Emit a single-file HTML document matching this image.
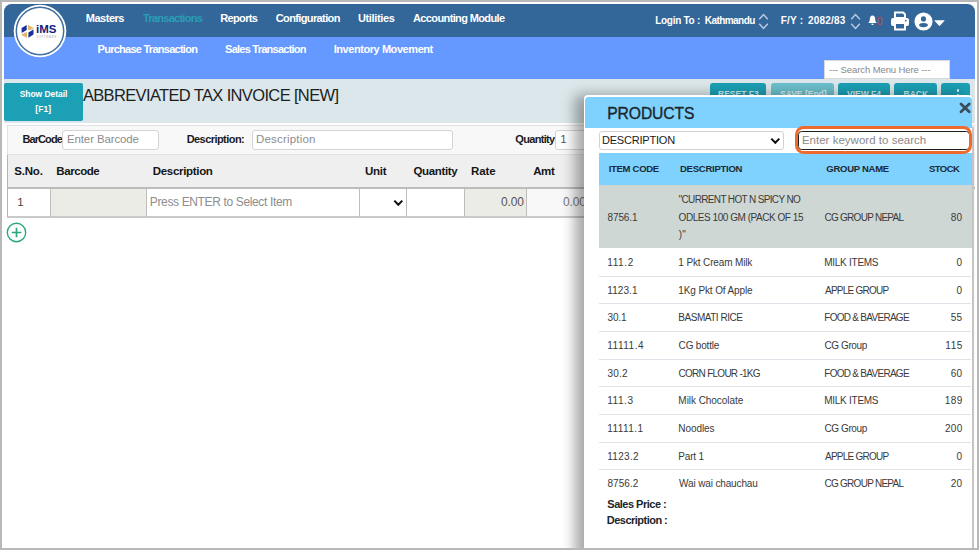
<!DOCTYPE html>
<html lang="en">
<head>
<meta charset="utf-8">
<title>Abbreviated Tax Invoice</title>
<style>
*{box-sizing:border-box;margin:0;padding:0}
html,body{width:979px;height:550px;overflow:hidden;background:#b8b8b8;font-family:"Liberation Sans",sans-serif}
.abs{position:absolute}
.t{position:absolute;white-space:pre}
#frame{position:absolute;left:2px;top:2px;width:975px;height:545.8px;background:#fff}
#app{position:absolute;left:3.6px;top:3.6px;width:971.8px;height:544.2px;background:#fff;border-radius:7.5px 7.5px 0 0;overflow:hidden}
#pg{position:absolute;left:-3.6px;top:-3.6px;width:979px;height:550px}
.btn{position:absolute;top:83px;height:24px;background:#1b9fb3;border-radius:3px}
.cell{position:absolute;top:189px;height:29px;border-right:1px solid #bdbdbd;border-bottom:2px solid #c9c9c9;background:#fff}
</style>
</head>
<body>
<div id="frame"></div>
<div id="app"><div id="pg">
  <!-- bars -->
  <div class="abs" style="left:0;top:0;width:979px;height:37.4px;background:#336699"></div>
  <div class="abs" style="left:0;top:37.4px;width:979px;height:42px;background:#6699ff"></div>
  <div class="abs" style="left:0;top:79.4px;width:979px;height:43.5px;background:#dbe7ea"></div>

  <!-- logo -->
  <svg class="abs" style="left:13px;top:4.4px" width="54" height="54" viewBox="0 0 54 54">
    <circle cx="27" cy="27" r="26.3" fill="#fff"/>
    <circle cx="27" cy="27" r="23.7" fill="none" stroke="#41709f" stroke-width="1.5"/>
    <g transform="translate(0,0.7)"><polygon points="8.6,23.2 13.7,20.2 13.7,25.3 8.6,28.4" fill="#1c2f9a"/>
    <polygon points="14.9,20 20.5,23.3 20.5,24.4 14.9,25.6" fill="#e2b76c"/>
    <polygon points="15.4,27.9 20.5,24.9 20.5,29.9 15.4,33" fill="#1c2f9a"/>
    <polygon points="8.6,29.6 14,27.4 14,33.1 8.6,30.6" fill="#e2b76c"/>
    <text x="23" y="28.7" font-family="Liberation Sans, sans-serif" font-weight="bold" font-size="10" fill="#16207c" textLength="20.4" lengthAdjust="spacingAndGlyphs">iMS</text></g>
    <text x="23.2" y="33.9" font-family="Liberation Sans, sans-serif" font-size="2.6" fill="#a9a9a9" textLength="20" lengthAdjust="spacing">SOFTWARE</text>
  </svg>

  <span class="t" style="left:85.85px;top:10.80px;font-size:11px;font-weight:bold;letter-spacing:-0.500px;line-height:14px;color:#fff;">Masters</span><span class="t" style="left:220.25px;top:10.80px;font-size:11px;font-weight:bold;letter-spacing:-0.650px;line-height:14px;color:#fff;">Reports</span><span class="t" style="left:275.80px;top:10.80px;font-size:11px;font-weight:bold;letter-spacing:-0.625px;line-height:14px;color:#fff;">Configuration</span><span class="t" style="left:357.95px;top:10.80px;font-size:11px;font-weight:bold;letter-spacing:-0.350px;line-height:14px;color:#fff;">Utilities</span><span class="t" style="left:413.05px;top:10.80px;font-size:11px;font-weight:bold;letter-spacing:-0.625px;line-height:14px;color:#fff;">Accounting Module</span><span class="t" style="left:143.00px;top:10.80px;font-size:11px;font-weight:bold;letter-spacing:-0.736px;line-height:14px;color:#2a9eb6;">Transactions</span><span class="t" style="left:97.55px;top:41.60px;font-size:11px;font-weight:bold;letter-spacing:-0.737px;line-height:14px;color:#fff;">Purchase Transaction</span><span class="t" style="left:225.05px;top:41.60px;font-size:11px;font-weight:bold;letter-spacing:-0.753px;line-height:14px;color:#fff;">Sales Transaction</span><span class="t" style="left:333.65px;top:41.60px;font-size:11px;font-weight:bold;letter-spacing:-0.432px;line-height:14px;color:#fff;">Inventory Movement</span><span class="t" style="left:655.15px;top:13.50px;font-size:10px;font-weight:bold;letter-spacing:-0.278px;line-height:13px;color:#fff;">Login To :</span><span class="t" style="left:704.75px;top:13.50px;font-size:10px;font-weight:bold;letter-spacing:-0.550px;line-height:13px;color:#fff;">Kathmandu</span><span class="t" style="left:780.85px;top:13.50px;font-size:10px;font-weight:bold;letter-spacing:0.162px;line-height:13px;color:#fff;">F/Y :</span><span class="t" style="left:808.05px;top:13.50px;font-size:10px;font-weight:bold;letter-spacing:0.200px;line-height:13px;color:#fff;">2082/83</span><span class="t" style="left:876.50px;top:13.70px;font-size:10.5px;font-weight:normal;letter-spacing:0.000px;line-height:14px;color:#e23a44;">0</span>
  <!-- spinners -->
  <svg class="abs" style="left:757.5px;top:12.5px" width="11" height="17" viewBox="0 0 11 17"><path d="M1.2 6.2 L5.5 1.6 L9.8 6.2 M1.2 10.8 L5.5 15.4 L9.8 10.8" fill="none" stroke="#b9cbe3" stroke-width="1.45"/></svg>
  <svg class="abs" style="left:850.2px;top:12.5px" width="11" height="17" viewBox="0 0 11 17"><path d="M1.2 6.2 L5.5 1.6 L9.8 6.2 M1.2 10.8 L5.5 15.4 L9.8 10.8" fill="none" stroke="#b9cbe3" stroke-width="1.45"/></svg>
  <!-- bell -->
  <svg class="abs" style="left:868.2px;top:15.3px" width="9" height="11" viewBox="0 0 10 11" preserveAspectRatio="none"><path d="M5 0.4 C2.8 0.4 2 2.4 2 4.4 C2 6.4 1 7 0.3 7.9 L9.7 7.9 C9 7 8 6.4 8 4.4 C8 2.4 7.2 0.4 5 0.4 Z M3.6 8.7 A1.4 1.4 0 0 0 6.4 8.7 Z" fill="#fff"/></svg>
  <!-- printer -->
  <svg class="abs" style="left:890px;top:11px" width="20" height="20" viewBox="0 0 20 20">
    <path d="M5 1.5 H13.2 L15 3.3 V7 H5 Z" fill="none" stroke="#fff" stroke-width="2"/>
    <rect x="1" y="7" width="18" height="8" rx="2" fill="#fff"/>
    <rect x="5" y="12" width="10" height="6.5" fill="#336699" stroke="#fff" stroke-width="2"/>
    <circle cx="15.8" cy="9.6" r="0.9" fill="#336699"/>
  </svg>
  <!-- user -->
  <svg class="abs" style="left:914px;top:11.5px" width="19" height="19" viewBox="0 0 20 20">
    <circle cx="10" cy="10" r="9.5" fill="#fff"/>
    <circle cx="10" cy="7.3" r="2.7" fill="#336699"/>
    <ellipse cx="10" cy="13.8" rx="4.6" ry="2.2" fill="#336699"/>
  </svg>
  <svg class="abs" style="left:934.2px;top:19.8px" width="11" height="6" viewBox="0 0 11 6"><path d="M0.9 0.3 H10.1 Q10.8 0.5 10.3 1.1 L6.1 5.4 Q5.5 5.9 4.9 5.4 L0.7 1.1 Q0.2 0.5 0.9 0.3 Z" fill="#fff"/></svg>

  <!-- search menu -->
  <div class="abs" style="left:824.3px;top:59.6px;width:125.8px;height:19.8px;background:#fff;border:1px solid #d8d8d8"></div>
  <span class="t" style="left:828.90px;top:63.70px;font-size:9.5px;font-weight:normal;letter-spacing:-0.100px;line-height:12px;color:#888;">--- Search Menu Here ---</span>

  <!-- title row -->
  <div class="abs" style="left:3.6px;top:83px;width:79.2px;height:37.6px;background:#1ba0b5;border-radius:2px"></div>
  <div class="btn" style="left:710px;width:56px"></div>
  <div class="btn" style="left:771px;width:63px;background:#6bbfcc"></div>
  <div class="btn" style="left:838.3px;width:51.8px"></div>
  <div class="btn" style="left:894.3px;width:42.5px"></div>
  <div class="btn" style="left:940.6px;width:29.6px"></div>
  <span class="t" style="left:718px;top:89.2px;font-size:8.5px;font-weight:bold;color:#cdebf0;line-height:11px">RESET F3</span>
  <span class="t" style="left:780px;top:89.2px;font-size:8.5px;font-weight:bold;color:#d8eff3;line-height:11px">SAVE [End]</span>
  <span class="t" style="left:847px;top:89.2px;font-size:8.5px;font-weight:bold;color:#cdebf0;line-height:11px">VIEW F4</span>
  <span class="t" style="left:903.5px;top:89.2px;font-size:8.5px;font-weight:bold;color:#cdebf0;line-height:11px">BACK</span>
  <div class="abs" style="left:956.5px;top:88.8px;width:2.8px;height:2.8px;border-radius:50%;background:#e6f6f8"></div>
  <div class="abs" style="left:956.5px;top:93.6px;width:2.8px;height:2.8px;border-radius:50%;background:#e6f6f8"></div>
  <span class="t" style="left:82.90px;top:84.70px;font-size:16.5px;font-weight:normal;letter-spacing:-0.643px;line-height:21px;color:#1e1e1e;">ABBREVIATED TAX INVOICE [NEW]</span><span class="t" style="left:19.75px;top:89.20px;font-size:8.5px;font-weight:bold;letter-spacing:-0.060px;line-height:11px;color:#fff;">Show Detail</span><span class="t" style="left:35.30px;top:103.50px;font-size:8.5px;font-weight:bold;letter-spacing:0.083px;line-height:11px;color:#fff;">[F1]</span>

  <!-- barcode row -->
  <div class="abs" style="left:7.4px;top:125px;width:970px;height:29.8px;background:#f8f8f8;border:1px solid #e2e2e2"></div>
  <span class="t" style="left:22.45px;top:132.00px;font-size:11px;font-weight:bold;letter-spacing:-0.908px;line-height:14px;color:#1b1b1b;">BarCode</span><span class="t" style="left:186.65px;top:132.00px;font-size:11px;font-weight:bold;letter-spacing:-0.555px;line-height:14px;color:#1b1b1b;">Description:</span><span class="t" style="left:515.30px;top:132.00px;font-size:11px;font-weight:bold;letter-spacing:-0.686px;line-height:14px;color:#1b1b1b;">Quantity</span>
  <div class="abs" style="left:62.4px;top:129.8px;width:96.2px;height:20px;background:#fff;border:1px solid #d4d4d4;border-radius:3px"></div>
  <div class="abs" style="left:252px;top:129.8px;width:201.2px;height:19.9px;background:#fff;border:1px solid #d4d4d4;border-radius:3px"></div>
  <div class="abs" style="left:555px;top:130px;width:100px;height:19.8px;background:#fff;border:1px solid #d4d4d4;border-radius:3px"></div>
  <span class="t" style="left:67.00px;top:132.10px;font-size:11.5px;font-weight:normal;letter-spacing:-0.133px;line-height:15px;color:#8d8d8d;">Enter Barcode</span><span class="t" style="left:255.90px;top:132.10px;font-size:11.5px;font-weight:normal;letter-spacing:0.205px;line-height:15px;color:#8d8d8d;">Description</span><span class="t" style="left:560.25px;top:132.10px;font-size:11.5px;font-weight:normal;letter-spacing:0.000px;line-height:15px;color:#555;">1</span>

  <!-- table -->
  <div class="abs" style="left:7px;top:155px;width:970px;height:34px;background:#efefef;border-left:1px solid #b5b5b5;border-bottom:2px solid #bcbcbc"></div>
  <div class="cell" style="left:7px;width:44px;border-left:1px solid #b5b5b5"></div>
  <div class="cell" style="left:51px;width:96px;background:#ecece6"></div>
  <div class="cell" style="left:147px;width:213px"></div>
  <div class="cell" style="left:360px;width:47px"></div>
  <div class="cell" style="left:407px;width:58px"></div>
  <div class="cell" style="left:465px;width:62px;background:#ecece6"></div>
  <div class="cell" style="left:527px;width:62px;background:#f8f8f8"></div>
  <svg class="abs" style="left:392.6px;top:198.6px" width="10.6" height="8" viewBox="0 0 10.6 8"><path d="M1.3 1.6 L5.3 5.8 L9.3 1.6" fill="none" stroke="#111" stroke-width="2"/></svg>
  <span class="t" style="left:14.15px;top:163.50px;font-size:11.5px;font-weight:bold;letter-spacing:-0.175px;line-height:15px;color:#161616;">S.No.</span><span class="t" style="left:56.35px;top:163.50px;font-size:11.5px;font-weight:bold;letter-spacing:-0.433px;line-height:15px;color:#161616;">Barcode</span><span class="t" style="left:152.75px;top:163.50px;font-size:11.5px;font-weight:bold;letter-spacing:-0.315px;line-height:15px;color:#161616;">Description</span><span class="t" style="left:364.95px;top:163.50px;font-size:11.5px;font-weight:bold;letter-spacing:-0.200px;line-height:15px;color:#161616;">Unit</span><span class="t" style="left:413.50px;top:163.50px;font-size:11.5px;font-weight:bold;letter-spacing:-0.357px;line-height:15px;color:#161616;">Quantity</span><span class="t" style="left:471.05px;top:163.50px;font-size:11.5px;font-weight:bold;letter-spacing:-0.083px;line-height:15px;color:#161616;">Rate</span><span class="t" style="left:533.25px;top:163.50px;font-size:11.5px;font-weight:bold;letter-spacing:-0.450px;line-height:15px;color:#161616;">Amt</span><span class="t" style="left:17.15px;top:195.30px;font-size:11.5px;font-weight:normal;letter-spacing:0.000px;line-height:15px;color:#444;">1</span><span class="t" style="left:149.80px;top:194.40px;font-size:12px;font-weight:normal;letter-spacing:-0.358px;line-height:16px;color:#8d8d8d;">Press ENTER to Select Item</span><span class="t" style="left:500.90px;top:194.40px;font-size:12px;font-weight:normal;letter-spacing:-0.133px;line-height:16px;color:#555;">0.00</span><span class="t" style="left:562.90px;top:194.40px;font-size:12px;font-weight:normal;letter-spacing:-0.133px;line-height:16px;color:#777;">0.00</span>
  <!-- plus -->
  <svg class="abs" style="left:5.85px;top:221.55px" width="21" height="21" viewBox="0 0 21 21"><circle cx="10.5" cy="10.5" r="9.2" fill="#fff" stroke="#2aa87a" stroke-width="1.4"/><path d="M10.5 5.7 V15.3 M5.7 10.5 H15.3" stroke="#2aa87a" stroke-width="1.7"/></svg>

  <!-- right edge line -->
  <div class="abs" style="left:972px;top:127px;width:1.6px;height:425px;background:#c9c9c9"></div>

  <!-- popup -->
  <div class="abs" style="left:584px;top:95.4px;width:387.6px;height:470px;background:#fff;border-radius:4px;box-shadow:-9px 0 14px rgba(0,0,0,.35)"></div>
  <div class="abs" style="left:585.2px;top:96.7px;width:386.4px;height:30.9px;background:#7fd1fe;border-radius:3.5px 3.5px 0 0"></div>
  <svg class="abs" style="left:958.8px;top:101.9px" width="12" height="12" viewBox="0 0 12 12"><path d="M2 2 L10.2 9.8 M10.2 2 L2 9.8" stroke="#3c4c5a" stroke-width="2.7" stroke-linecap="round"/></svg>
  <div class="abs" style="left:598.8px;top:130.6px;width:185px;height:19.4px;background:#fff;border:1px solid #d2d2d2;border-radius:3px"></div>
  <svg class="abs" style="left:770.4px;top:137px" width="10.6" height="8" viewBox="0 0 10.6 8"><path d="M1.3 1.6 L5.3 5.8 L9.3 1.6" fill="none" stroke="#111" stroke-width="2"/></svg>
  <div class="abs" style="left:798.4px;top:130.7px;width:172px;height:19.2px;background:#fff;border:1.5px solid #1f1f1f;border-radius:3.5px"></div>
  <div class="abs" style="left:599px;top:153.1px;width:372.6px;height:31.6px;background:#7fd1fe"></div>
  <div class="abs" style="left:599px;top:184.7px;width:372.6px;height:63.8px;background:#cfd7d5"></div>
  <div class="abs" style="left:599px;top:275.6px;width:372px;height:1.2px;background:#dfe3ea"></div><div class="abs" style="left:599px;top:303.2px;width:372px;height:1.2px;background:#dfe3ea"></div><div class="abs" style="left:599px;top:330.9px;width:372px;height:1.2px;background:#dfe3ea"></div><div class="abs" style="left:599px;top:358.6px;width:372px;height:1.2px;background:#dfe3ea"></div><div class="abs" style="left:599px;top:386.2px;width:372px;height:1.2px;background:#dfe3ea"></div><div class="abs" style="left:599px;top:413.9px;width:372px;height:1.2px;background:#dfe3ea"></div><div class="abs" style="left:599px;top:441.6px;width:372px;height:1.2px;background:#dfe3ea"></div><div class="abs" style="left:599px;top:469.3px;width:372px;height:1.2px;background:#dfe3ea"></div>
  <span class="t" style="left:607.15px;top:104.10px;font-size:15.7px;font-weight:normal;letter-spacing:-0.086px;line-height:20px;color:#1c262c;-webkit-text-stroke:0.35px #1c262c;">PRODUCTS</span><span class="t" style="left:602.00px;top:133.30px;font-size:11px;font-weight:normal;letter-spacing:-0.205px;line-height:14px;color:#1a1a1a;">DESCRIPTION</span><span class="t" style="left:801.90px;top:132.90px;font-size:11.5px;font-weight:normal;letter-spacing:0.016px;line-height:15px;color:#8a8a8a;">Enter keyword to search</span><span class="t" style="left:608.70px;top:162.50px;font-size:9.5px;font-weight:bold;letter-spacing:-0.287px;line-height:12px;color:#1c2a33;">ITEM CODE</span><span class="t" style="left:680.00px;top:162.50px;font-size:9.5px;font-weight:bold;letter-spacing:-0.245px;line-height:12px;color:#1c2a33;">DESCRIPTION</span><span class="t" style="left:826.35px;top:162.50px;font-size:9.5px;font-weight:bold;letter-spacing:-0.272px;line-height:12px;color:#1c2a33;">GROUP NAME</span><span class="t" style="left:928.95px;top:162.50px;font-size:9.5px;font-weight:bold;letter-spacing:-0.537px;line-height:12px;color:#1c2a33;">STOCK</span><span class="t" style="left:678.60px;top:193.00px;font-size:10px;font-weight:normal;letter-spacing:-0.645px;line-height:13px;color:#3a3a3a;">&quot;CURRENT HOT N SPICY NO</span><span class="t" style="left:678.60px;top:210.70px;font-size:10px;font-weight:normal;letter-spacing:-0.457px;line-height:13px;color:#3a3a3a;">ODLES 100 GM (PACK OF 15</span><span class="t" style="left:678.85px;top:228.30px;font-size:10px;font-weight:normal;letter-spacing:0.000px;line-height:13px;color:#3a3a3a;">)&quot;</span><span class="t" style="left:607.50px;top:210.70px;font-size:10px;font-weight:normal;letter-spacing:-0.110px;line-height:13px;color:#3a3a3a;">8756.1</span><span class="t" style="left:824.50px;top:210.70px;font-size:10px;font-weight:normal;letter-spacing:-0.735px;line-height:13px;color:#3a3a3a;">CG GROUP NEPAL</span><span class="t" style="left:950.70px;top:210.70px;font-size:10px;font-weight:normal;letter-spacing:0.350px;line-height:13px;color:#3a3a3a;">80</span><span class="t" style="left:607.25px;top:256.10px;font-size:10px;font-weight:normal;letter-spacing:0.612px;line-height:13px;color:#3a3a3a;">111.2</span><span class="t" style="left:678.35px;top:256.10px;font-size:10px;font-weight:normal;letter-spacing:-0.143px;line-height:13px;color:#3a3a3a;">1 Pkt Cream Milk</span><span class="t" style="left:824.25px;top:256.10px;font-size:10px;font-weight:normal;letter-spacing:-0.267px;line-height:13px;color:#3a3a3a;">MILK ITEMS</span><span class="t" style="left:956.55px;top:256.10px;font-size:10px;font-weight:normal;letter-spacing:0.000px;line-height:13px;color:#3a3a3a;">0</span><span class="t" style="left:607.25px;top:283.77px;font-size:10px;font-weight:normal;letter-spacing:0.090px;line-height:13px;color:#3a3a3a;">1123.1</span><span class="t" style="left:678.35px;top:283.77px;font-size:10px;font-weight:normal;letter-spacing:-0.127px;line-height:13px;color:#3a3a3a;">1Kg Pkt Of Apple</span><span class="t" style="left:825.00px;top:283.77px;font-size:10px;font-weight:normal;letter-spacing:-0.755px;line-height:13px;color:#3a3a3a;">APPLE GROUP</span><span class="t" style="left:956.55px;top:283.77px;font-size:10px;font-weight:normal;letter-spacing:0.000px;line-height:13px;color:#3a3a3a;">0</span><span class="t" style="left:607.50px;top:311.44px;font-size:10px;font-weight:normal;letter-spacing:-0.167px;line-height:13px;color:#3a3a3a;">30.1</span><span class="t" style="left:678.35px;top:311.44px;font-size:10px;font-weight:normal;letter-spacing:-0.477px;line-height:13px;color:#3a3a3a;">BASMATI RICE</span><span class="t" style="left:824.25px;top:311.44px;font-size:10px;font-weight:normal;letter-spacing:-0.718px;line-height:13px;color:#3a3a3a;">FOOD &amp; BAVERAGE</span><span class="t" style="left:950.70px;top:311.44px;font-size:10px;font-weight:normal;letter-spacing:0.350px;line-height:13px;color:#3a3a3a;">55</span><span class="t" style="left:607.25px;top:339.11px;font-size:10px;font-weight:normal;letter-spacing:0.508px;line-height:13px;color:#3a3a3a;">11111.4</span><span class="t" style="left:678.60px;top:339.11px;font-size:10px;font-weight:normal;letter-spacing:-0.181px;line-height:13px;color:#3a3a3a;">CG bottle</span><span class="t" style="left:824.50px;top:339.11px;font-size:10px;font-weight:normal;letter-spacing:-0.407px;line-height:13px;color:#3a3a3a;">CG Group</span><span class="t" style="left:945.35px;top:339.11px;font-size:10px;font-weight:normal;letter-spacing:0.475px;line-height:13px;color:#3a3a3a;">115</span><span class="t" style="left:607.50px;top:366.78px;font-size:10px;font-weight:normal;letter-spacing:0.167px;line-height:13px;color:#3a3a3a;">30.2</span><span class="t" style="left:678.60px;top:366.78px;font-size:10px;font-weight:normal;letter-spacing:-0.736px;line-height:13px;color:#3a3a3a;">CORN FLOUR -1KG</span><span class="t" style="left:824.25px;top:366.78px;font-size:10px;font-weight:normal;letter-spacing:-0.718px;line-height:13px;color:#3a3a3a;">FOOD &amp; BAVERAGE</span><span class="t" style="left:950.70px;top:366.78px;font-size:10px;font-weight:normal;letter-spacing:0.350px;line-height:13px;color:#3a3a3a;">60</span><span class="t" style="left:607.25px;top:394.45px;font-size:10px;font-weight:normal;letter-spacing:0.550px;line-height:13px;color:#3a3a3a;">111.3</span><span class="t" style="left:678.35px;top:394.45px;font-size:10px;font-weight:normal;letter-spacing:-0.046px;line-height:13px;color:#3a3a3a;">Milk Chocolate</span><span class="t" style="left:824.25px;top:394.45px;font-size:10px;font-weight:normal;letter-spacing:-0.267px;line-height:13px;color:#3a3a3a;">MILK ITEMS</span><span class="t" style="left:944.85px;top:394.45px;font-size:10px;font-weight:normal;letter-spacing:0.350px;line-height:13px;color:#3a3a3a;">189</span><span class="t" style="left:607.25px;top:422.12px;font-size:10px;font-weight:normal;letter-spacing:0.450px;line-height:13px;color:#3a3a3a;">11111.1</span><span class="t" style="left:678.35px;top:422.12px;font-size:10px;font-weight:normal;letter-spacing:-0.075px;line-height:13px;color:#3a3a3a;">Noodles</span><span class="t" style="left:824.50px;top:422.12px;font-size:10px;font-weight:normal;letter-spacing:-0.407px;line-height:13px;color:#3a3a3a;">CG Group</span><span class="t" style="left:944.90px;top:422.12px;font-size:10px;font-weight:normal;letter-spacing:0.325px;line-height:13px;color:#3a3a3a;">200</span><span class="t" style="left:607.25px;top:449.79px;font-size:10px;font-weight:normal;letter-spacing:0.290px;line-height:13px;color:#3a3a3a;">1123.2</span><span class="t" style="left:678.35px;top:449.79px;font-size:10px;font-weight:normal;letter-spacing:-0.200px;line-height:13px;color:#3a3a3a;">Part 1</span><span class="t" style="left:825.00px;top:449.79px;font-size:10px;font-weight:normal;letter-spacing:-0.755px;line-height:13px;color:#3a3a3a;">APPLE GROUP</span><span class="t" style="left:956.55px;top:449.79px;font-size:10px;font-weight:normal;letter-spacing:0.000px;line-height:13px;color:#3a3a3a;">0</span><span class="t" style="left:607.50px;top:477.46px;font-size:10px;font-weight:normal;letter-spacing:0.040px;line-height:13px;color:#3a3a3a;">8756.2</span><span class="t" style="left:679.10px;top:477.46px;font-size:10px;font-weight:normal;letter-spacing:-0.137px;line-height:13px;color:#3a3a3a;">Wai wai chauchau</span><span class="t" style="left:824.50px;top:477.46px;font-size:10px;font-weight:normal;letter-spacing:-0.735px;line-height:13px;color:#3a3a3a;">CG GROUP NEPAL</span><span class="t" style="left:950.70px;top:477.46px;font-size:10px;font-weight:normal;letter-spacing:0.350px;line-height:13px;color:#3a3a3a;">20</span><span class="t" style="left:607.35px;top:497.40px;font-size:11px;font-weight:bold;letter-spacing:-0.504px;line-height:14px;color:#20262b;">Sales Price :</span><span class="t" style="left:606.85px;top:513.30px;font-size:11px;font-weight:bold;letter-spacing:-0.525px;line-height:14px;color:#20262b;">Description :</span>
  <!-- annotation ring -->
  <div class="abs" style="left:795.3px;top:126px;width:176.9px;height:28px;border:3px solid #f26a2b;border-radius:8.5px"></div>
</div></div>
</body>
</html>
